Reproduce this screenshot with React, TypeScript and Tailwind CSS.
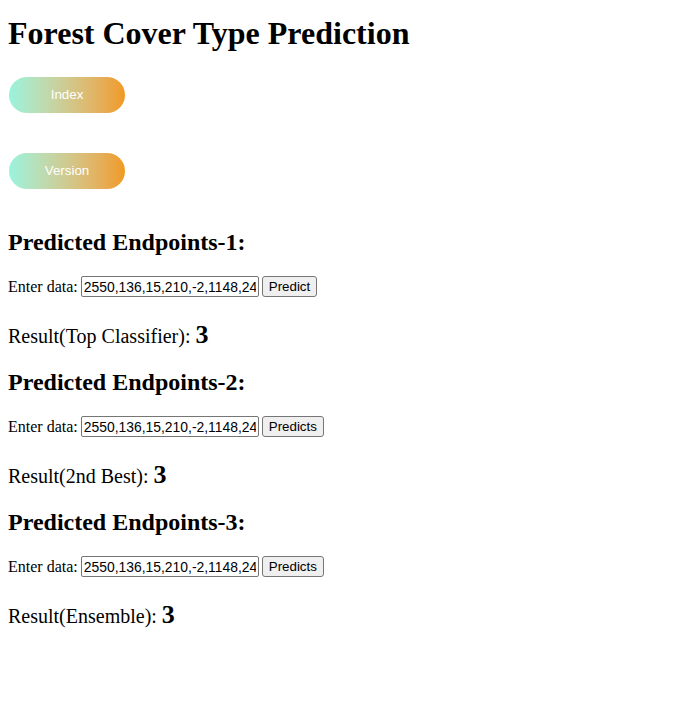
import { useState } from "react";

const SAMPLE = "2550,136,15,210,-2,1148,242,238,123,1234,0,0,1";

const endpoints = [
  { n: 1, btn: "Predict", label: "Result(Top Classifier):" },
  { n: 2, btn: "Predicts", label: "Result(2nd Best):" },
  { n: 3, btn: "Predicts", label: "Result(Ensemble):" },
];

export default function App() {
  return (
    <div className="min-h-screen bg-white px-2 pb-20 font-['Liberation_Serif',serif] text-black">
      <h1 className="mt-[15px] text-[32px] font-bold leading-[37px]">Forest Cover Type Prediction</h1>

      <NavPill label="Index" className="mt-[25px]" />
      <NavPill label="Version" className="mt-[40px]" />

      <div className="mt-[39px]">
        {endpoints.map((e, i) => (
          <Endpoint key={e.n} {...e} first={i === 0} />
        ))}
      </div>
    </div>
  );
}

function NavPill({ label, className }: { label: string; className?: string }) {
  return (
    <button
      className={`ml-px flex h-9 w-[116px] items-center justify-center rounded-full bg-gradient-to-r from-[#98f3de] to-[#f09a1e] font-['Liberation_Sans',Arial,sans-serif] text-[13.33px] text-white ${className ?? ""}`}
    >
      {label}
    </button>
  );
}

function Endpoint({ n, btn, label, first }: { n: number; btn: string; label: string; first: boolean }) {
  const [val, setVal] = useState(SAMPLE);
  return (
    <section className={first ? "" : "mt-[19px]"}>
      <h2 className="text-[24px] font-bold leading-[28px]">Predicted Endpoints-{n}:</h2>

      <form className="mt-5 flex h-[21px] items-center" onSubmit={(ev) => ev.preventDefault()}>
        <label className="text-[16px] leading-[18px]">Enter data:</label>
        <input
          value={val}
          onChange={(ev) => setVal(ev.target.value)}
          className="ml-[3px] h-[21px] w-[178px] rounded-[2px] border border-[#767676] bg-white px-[2px] font-['Liberation_Sans',Arial,sans-serif] text-[13.9px] text-black outline-none"
        />
        <button className="ml-[3px] h-[21px] rounded-[3px] border border-[#767676] bg-[#efefef] px-[6px] font-['Liberation_Sans',Arial,sans-serif] text-[13.33px] leading-none text-black">
          {btn}
        </button>
      </form>

      {/* result line: label + big bold class id */}
      <p className="mt-[24px] flex h-[28px] items-baseline">
        <span className="text-[20px] leading-[23px]">{label}</span>
        <b className="ml-[5px] text-[26px] leading-[28px]">3</b>
      </p>
    </section>
  );
}
